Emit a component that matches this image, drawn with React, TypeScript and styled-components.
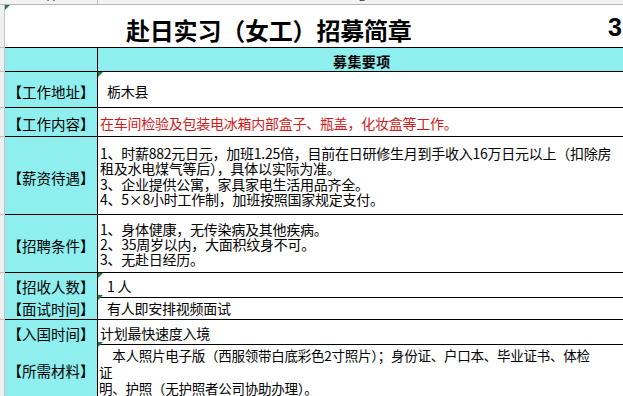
import React from "react";
import styled, { createGlobalStyle } from "styled-components";

const Global = createGlobalStyle`
  html, body { margin: 0; padding: 0; background: #fff; }
  body {
    width: 623px; height: 396px; overflow: hidden;
    font-family: "Noto Sans CJK SC", "Noto Sans", sans-serif;
    color: #000;
  }
`;

const CYAN = "#8fefef";

const Sheet = styled.div`
  display: flex;
  flex-direction: column;
  width: 623px;
  height: 396px;
  overflow: hidden;
`;

const ColHeader = styled.div`
  display: grid;
  grid-template-columns: 5px 92px 1fr;
  height: 5px;
  flex: none;
  box-sizing: border-box;
  border-bottom: 1px solid #b8b8b8;
  background: #f2f2f2;
  overflow: hidden;
`;

const ColLetter = styled.div<{ $line?: boolean }>`
  font-family: "Liberation Sans", Arial, sans-serif;
  font-size: 11px;
  line-height: 12px;
  margin-top: -9px;
  text-align: center;
  color: #333;
  border-left: ${(p) => (p.$line ? "1px solid #b8b8b8" : "none")};
  padding-left: ${(p) => (p.$line ? "4px" : "0")};
`;

const Row = styled.div<{ $h?: number }>`
  display: grid;
  grid-template-columns: 5px 92px 1fr;
  height: ${(p) => (p.$h ? `${p.$h}px` : "auto")};
  flex: ${(p) => (p.$h ? "none" : "1")};
`;

const RowHead = styled.div<{ $open?: boolean }>`
  background: #f0f0f0;
  border-right: 1px solid #c4c4c4;
  border-bottom: ${(p) => (p.$open ? "none" : "1px solid #c4c4c4")};
  box-sizing: border-box;
`;

const TitleCell = styled.div`
  grid-column: 2 / 4;
  position: relative;
  display: flex;
  align-items: flex-end;
  justify-content: space-between;
  border-bottom: 1px solid #000;
  padding: 0 1px 3px 121px;
  box-sizing: border-box;
  overflow: hidden;
`;

const TitleText = styled.div`
  font-size: 24px;
  font-weight: 700;
  line-height: 28px;
  white-space: nowrap;
  letter-spacing: -0.2px;
`;

const TitleNum = styled.div`
  font-family: "Liberation Sans", Arial, sans-serif;
  font-size: 25px;
  font-weight: 700;
  line-height: 28px;
  margin-bottom: 3px;
`;

const HeadLabel = styled.div`
  background: ${CYAN};
  border-bottom: 1px solid #000;
  box-sizing: border-box;
`;

const HeadValue = styled.div`
  background: ${CYAN};
  border-left: 1px solid #000;
  border-bottom: 1px solid #000;
  box-sizing: border-box;
  display: flex;
  align-items: center;
  padding: 2px 0 0 235px;
  font-size: 14px;
  font-weight: 700;
  letter-spacing: 0.4px;
  white-space: nowrap;
`;

const Label = styled.div<{ $open?: boolean }>`
  background: ${CYAN};
  border-bottom: ${(p) => (p.$open ? "none" : "1px solid #000")};
  box-sizing: border-box;
  display: flex;
  align-items: center;
  justify-content: center;
  padding-top: 3px;
  font-size: 14.5px;
  white-space: nowrap;
`;

const Value = styled.div<{
  $indent: number;
  $red?: boolean;
  $lh: number;
  $open?: boolean;
  $fs: number;
  $top: number;
}>`
  position: relative;
  border-left: 1px solid #000;
  border-bottom: ${(p) => (p.$open ? "none" : "1px solid #000")};
  box-sizing: border-box;
  display: flex;
  flex-direction: column;
  justify-content: center;
  padding: ${(p) => p.$top}px 0 0 ${(p) => p.$indent}px;
  font-size: ${(p) => p.$fs}px;
  line-height: ${(p) => p.$lh}px;
  color: ${(p) => (p.$red ? "#cc1c1c" : "#000")};
  white-space: nowrap;
  overflow: hidden;
  letter-spacing: -0.25px;
`;

const Marker = styled.span`
  position: absolute;
  left: 0;
  top: 0;
  width: 0;
  height: 0;
  border-top: 5px solid #1d7a43;
  border-right: 5px solid transparent;
`;

type RowData = {
  label: string;
  h?: number;
  indent: number;
  red?: boolean;
  mark?: boolean;
  lh?: number;
  fs?: number;
  top?: number;
  lines: string[];
};

const rows: RowData[] = [
  { label: "【工作地址】", h: 36, indent: 9, mark: true, lines: ["栃木县"] },
  {
    label: "【工作内容】",
    h: 29,
    indent: 2,
    red: true,
    lines: ["在车间检验及包装电冰箱内部盒子、瓶盖，化妆盒等工作。"],
  },
  {
    label: "【薪资待遇】",
    h: 78,
    indent: 2,
    lh: 15.5,
    lines: [
      "1、时薪882元日元，加班1.25倍，目前在日研修生月到手收入16万日元以上（扣除房",
      "租及水电煤气等后），具体以实际为准。",
      "3、企业提供公寓，家具家电生活用品齐全。",
      "4、5×8小时工作制，加班按照国家规定支付。",
    ],
  },
  {
    label: "【招聘条件】",
    h: 58,
    indent: 2,
    lh: 15,
    lines: [
      "1、身体健康，无传染病及其他疾病。",
      "2、35周岁以内，大面积纹身不可。",
      "3、无赴日经历。",
    ],
  },
  { label: "【招收人数】", h: 22, indent: 9, mark: true, lines: ["1 人"] },
  { label: "【面试时间】", h: 25, indent: 9, mark: true, lines: ["有人即安排视频面试"] },
  { label: "【入国时间】", h: 22, indent: 2, lines: ["计划最快速度入境"] },
  {
    label: "【所需材料】",
    indent: 1,
    mark: true,
    lh: 16.5,
    fs: 13.5,
    top: 5,
    lines: [
      "　本人照片电子版（西服领带白底彩色2寸照片）；身份证、户口本、毕业证书、体检",
      "证",
      "明、护照（无护照者公司协助办理）。",
    ],
  },
];

export default function App() {
  return (
    <>
      <Global />
      <Sheet>
        <ColHeader>
          <div />
          <ColLetter>A</ColLetter>
          <ColLetter $line>B</ColLetter>
        </ColHeader>
        <Row $h={43}>
          <RowHead />
          <TitleCell>
            <Marker />
            <TitleText>赴日实习（女工）招募简章</TitleText>
            <TitleNum>3</TitleNum>
          </TitleCell>
        </Row>
        <Row $h={24}>
          <RowHead />
          <HeadLabel />
          <HeadValue>募集要项</HeadValue>
        </Row>
        {rows.map((r) => (
          <Row key={r.label} $h={r.h}>
            <RowHead $open={!r.h} />
            <Label $open={!r.h}>{r.label}</Label>
            <Value
              $indent={r.indent}
              $red={r.red}
              $lh={r.lh ?? 16}
              $fs={r.fs ?? 14}
              $top={r.top ?? 2}
              $open={!r.h}
            >
              {r.mark && <Marker />}
              {r.lines.map((l, i) => (
                <div key={i}>{l}</div>
              ))}
            </Value>
          </Row>
        ))}
      </Sheet>
    </>
  );
}
